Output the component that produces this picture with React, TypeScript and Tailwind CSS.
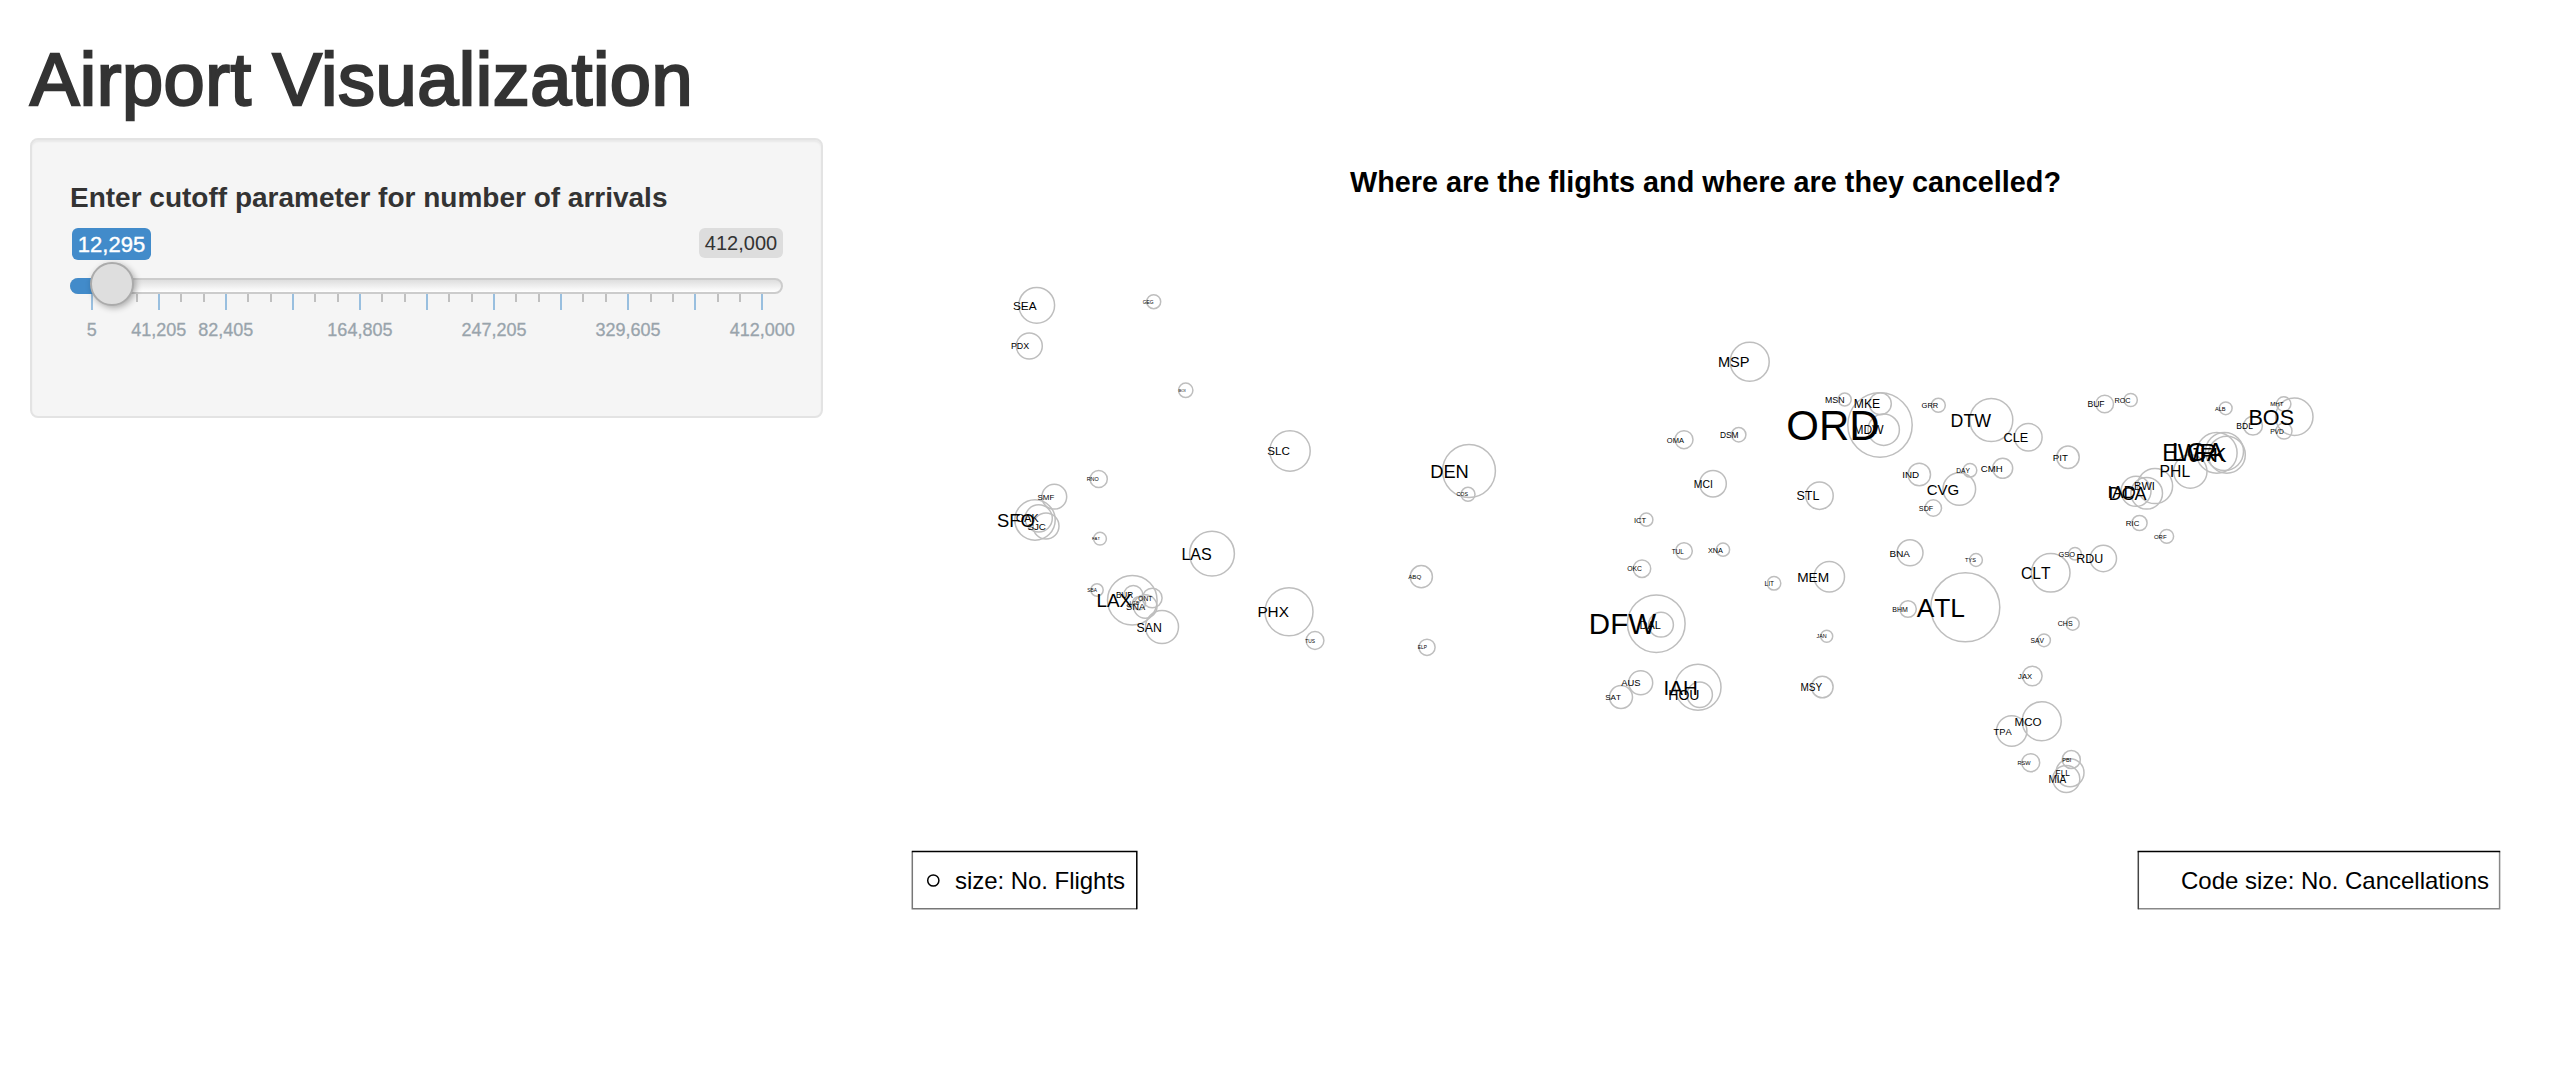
type Airport = [code: string, x: number, y: number, r: number, size: number];

// code, centre x, centre y, radius (arrivals), label size (cancellations)
const airports: Airport[] = [
  ['SEA', 1036.7, 305.3, 17.9, 11.8], ['PDX', 1029.3, 346, 13, 8.9], ['GEG', 1153.7, 301.7, 7, 4.9],
  ['BOI', 1185.7, 390.3, 7.2, 4.2], ['SLC', 1290, 451, 20.2, 11.6], ['RNO', 1098.7, 479, 8.6, 5.4],
  ['SMF', 1054.3, 496.7, 12.4, 7.9], ['SFO', 1035, 520, 20.2, 18.4], ['OAK', 1038.7, 518.3, 13.6, 10.7],
  ['SJC', 1046, 526, 13, 9.8], ['FAT', 1100, 538.7, 6.4, 4.2], ['LAS', 1212, 553.7, 22.4, 16.1],
  ['SBA', 1097, 590, 6.2, 4.8], ['LAX', 1132.3, 600.3, 24.8, 18.9], ['BUR', 1133.3, 595, 9.5, 8.2],
  ['ONT', 1152.3, 598, 9.8, 6.6], ['LGB', 1139, 603.3, 6.6, 4.6], ['SNA', 1145.3, 606.5, 11.7, 9.3],
  ['SAN', 1162, 627, 16.5, 12.3], ['PHX', 1289, 611.7, 24, 15.3], ['TUS', 1315, 640.5, 8.9, 4.9],
  ['DEN', 1469, 471, 26.4, 18.3], ['COS', 1468, 494.3, 7, 5.3], ['ABQ', 1421.3, 576.7, 11.1, 6.2],
  ['ELP', 1427, 647.3, 8.1, 4.8], ['MSP', 1749.7, 361.7, 19.5, 14.6], ['MSN', 1844.7, 399.5, 6.5, 8.8],
  ['MKE', 1880.3, 403.7, 11, 12.2], ['MDW', 1883.7, 429.7, 15.7, 12], ['ORD', 1880, 425, 32.2, 42],
  ['OMA', 1684, 439.7, 9, 7.5], ['DSM', 1738.7, 434.7, 7.2, 8.4], ['MCI', 1713, 483.7, 13.3, 10.4],
  ['STL', 1819.5, 495.7, 13.7, 12.5], ['ICT', 1646.3, 519.7, 6.6, 7.6], ['TUL', 1684, 551, 8.3, 6.4],
  ['XNA', 1723, 549.7, 6.6, 7.3], ['OKC', 1642, 568.7, 8.7, 6.8], ['LIT', 1774, 583.3, 6.8, 6.5],
  ['MEM', 1829.3, 576.7, 15.2, 13.7], ['DFW', 1656.3, 623.7, 28.8, 29.5], ['DAL', 1661, 624.7, 12.4, 11],
  ['JAN', 1826.7, 636.3, 6, 5.4], ['AUS', 1640.7, 682.7, 12, 9.4], ['SAT', 1621, 697, 11.5, 8.1],
  ['IAH', 1698, 687.3, 23, 20.5], ['HOU', 1699.7, 694.7, 12.7, 14.1], ['MSY', 1822.3, 687, 10.8, 10],
  ['GRR', 1938.3, 405.3, 7, 7.5], ['DTW', 1991.3, 420, 21.5, 17.8], ['CLE', 2028.3, 437.3, 13.8, 12.7],
  ['PIT', 2068, 457.3, 11.2, 9.7], ['BUF', 2104.7, 404, 8.8, 8.6], ['ROC', 2130.7, 400, 6.6, 7.3],
  ['IND', 1919.3, 474.5, 11.2, 9.8], ['DAY', 1970, 470.3, 6.8, 6.6], ['CMH', 2002.7, 468.3, 10, 9.6],
  ['CVG', 1959.3, 489, 16.3, 15], ['SDF', 1933.3, 508, 8.2, 7.2], ['BNA', 1910, 552.8, 13, 9.9],
  ['TYS', 1976, 560, 6.4, 5.6], ['RDU', 2103.3, 558.5, 13.2, 12.4], ['CLT', 2050.7, 572.8, 19.3, 15.6],
  ['GSO', 2075, 553.7, 6.3, 7.4], ['RIC', 2139.5, 523, 7.6, 7.9], ['ORF', 2166.7, 536.3, 6.9, 6],
  ['ATL', 1965.3, 607.3, 34.5, 26.4], ['BHM', 1908, 609, 8.3, 7], ['CHS', 2072.7, 623.7, 6.5, 7.1],
  ['SAV', 2044, 640.3, 6.4, 6.7], ['JAX', 2032.3, 676, 9.8, 7.7], ['MCO', 2041.7, 721.3, 19.5, 11.6],
  ['TPA', 2011.7, 731, 15.2, 9.3], ['RSW', 2030.7, 762.7, 9, 5.6], ['PBI', 2071.3, 759.5, 9, 5.6],
  ['FLL', 2070, 772.7, 14, 8.3], ['MIA', 2066.3, 779, 13.5, 10], ['ALB', 2225.7, 408.3, 6.4, 5.7],
  ['MHT', 2283.7, 404, 7.2, 6.2], ['BOS', 2294.3, 416.7, 18.7, 21.6], ['BDL', 2253, 425.7, 9.4, 8.5],
  ['PVD', 2284, 431, 8, 6.7], ['PHL', 2190.3, 471.5, 16.7, 15.7], ['EWR', 2216.8, 452.9, 20.3, 23.3],
  ['LGA', 2224.5, 451.5, 19, 26.2], ['JFK', 2226.8, 454.7, 18.5, 21], ['BWI', 2155, 486, 17.6, 11],
  ['DCA', 2146.7, 493.3, 15.8, 18], ['IAD', 2136, 491.3, 15, 17],
];

const tickLabels: [number, string][] = [
  [0, '5'], [1, '41,205'], [2, '82,405'], [4, '164,805'], [6, '247,205'], [8, '329,605'], [10, '412,000'],
];

function Slider() {
  return (
    <div className="relative h-[120px] w-[713px]">
      <div className="flex items-start justify-between">
        <span className="ml-[2px] flex h-8 w-[79px] items-center justify-center rounded-[6px] bg-[#428bca] text-[22px] text-white [-webkit-text-stroke:0.4px_white]">12,295</span>
        <span className="flex h-[30px] w-[84px] items-center justify-center rounded-[6px] bg-[#ddd] text-[20px] text-[#333]">412,000</span>
      </div>
      <div className="absolute left-0 top-[50px] h-4 w-full rounded-[16px] border-2 border-[#ccc] bg-gradient-to-b from-[#dedede] to-white" />
      <div className="absolute left-0 top-[50px] h-4 w-[40px] rounded-l-[16px] bg-[#428bca]" />
      <svg className="absolute left-0 top-[66px] overflow-visible" width="713" height="60">
        {Array.from({ length: 31 }, (_, i) => {
          const major = i % 3 === 0;
          return (
            <rect key={i} x={Math.round(21 + i * 22.34)} y="0" width="2" height={major ? 16 : 8} fill={major ? '#99bfdf' : '#c0c0c0'} />
          );
        })}
        {tickLabels.map(([i, label]) => (
          <text key={label} x={21.7 + i * 67.05} y="42" textAnchor="middle" fontSize="18" fill="#99a4ac" stroke="#99a4ac" strokeWidth="0.3">{label}</text>
        ))}
      </svg>
      <div className="absolute left-[20px] top-[34px] size-[44px] rounded-full border-2 border-[#ababab] bg-[#dedede] shadow-[2px_2px_6px_rgba(0,0,0,0.3)]" />
    </div>
  );
}

function Plot() {
  return (
    <svg className="[font-kerning:none]" width="1678" height="932" viewBox="880 140 1678 932">
      <text x="1705.5" y="192" textAnchor="middle" fontSize="28.8" fontWeight="bold" textLength="711">
        Where are the flights and where are they cancelled?
      </text>
      {airports.map(([code, x, y, r]) => (
        <circle key={code} cx={x} cy={y} r={r} fill="none" stroke="#bebebe" strokeWidth="1.5" />
      ))}
      {airports.map(([code, x, y, , size]) => (
        <text key={code} x={x - size * 0.01} y={y + size * 0.35 + 0.3} textAnchor="end" fontSize={size}>{code}</text>
      ))}
      <g fill="none" stroke="#000" strokeWidth="1.5">
        <path d="M912.3 851.5V908.8H1136.8" stroke="#777" />
        <path d="M911.8 851.5H1136.8V909.3" />
        <circle cx="933.3" cy="880.5" r="5.6" />
        <path d="M2499.6 851.5V908.8H2138.3" stroke="#888" />
        <path d="M2138.3 909.3V851.5" stroke="#444" />
        <path d="M2137.6 851.5H2500.2" />
      </g>
      <text x="955" y="889" fontSize="24" textLength="170">size: No. Flights</text>
      <text x="2181" y="889" fontSize="24" textLength="308">Code size: No. Cancellations</text>
    </svg>
  );
}

export default function App() {
  return (
    <div className="flex h-[1072px] w-[2558px] flex-col overflow-hidden bg-white font-['Liberation_Sans',Arial,sans-serif]">
      <h1 className="h-[138px] pl-[30px] pt-[40px] text-[74px] font-medium leading-[80px] tracking-[0.5px] text-[#333] [-webkit-text-stroke:2.4px_#333]">
        Airport Visualization
      </h1>
      <div className="flex pl-[30px]">
        <aside className="h-[280px] w-[793px] shrink-0 rounded-[8px] border-2 border-[#e3e3e3] bg-[#f5f5f5] pl-[38px] pt-[38px] shadow-[inset_0_2px_2px_rgba(0,0,0,0.05)]">
          <div className="mb-[10px] h-[40px] whitespace-nowrap text-[28px] font-bold leading-[40px] text-[#333]">
            Enter cutoff parameter for number of arrivals
          </div>
          <Slider />
        </aside>
        <main className="ml-[57px] mt-[2px]"><Plot /></main>
      </div>
    </div>
  );
}
